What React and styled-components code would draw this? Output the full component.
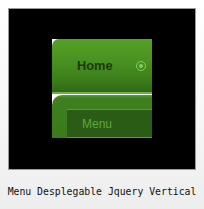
import styled, { createGlobalStyle } from "styled-components";

const GlobalStyle = createGlobalStyle`
  html, body {
    margin: 0;
    padding: 0;
  }
  body {
    width: 204px;
    height: 209px;
    background: linear-gradient(to bottom, #ffffff 0%, #f6f6f6 60%, #ededed 100%);
    overflow: hidden;
  }
`;

const Page = styled.div`
  width: 204px;
  height: 209px;
  padding-top: 8px;
  box-sizing: border-box;
  display: flex;
  flex-direction: column;
  align-items: center;
`;

const Frame = styled.div`
  width: 188px;
  height: 162px;
  box-sizing: border-box;
  background: #000;
  border: 1px solid #9a9a9a;
  display: flex;
  align-items: center;
  justify-content: center;
`;

const Panel = styled.div`
  width: 100px;
  height: 99px;
  margin-top: -1px;
  background: #fff;
  display: flex;
  flex-direction: column;
`;

const HomeItem = styled.div`
  height: 55px;
  box-sizing: border-box;
  border-top-left-radius: 7px;
  background: linear-gradient(to bottom, #55a126 0%, #4a9222 40%, #3a7c19 80%, #30681a 100%);
  border-bottom: 2px solid #6ab33e;
  display: flex;
  align-items: center;
  padding-left: 25px;
  padding-right: 5px;
`;

const HomeLabel = styled.span`
  flex: 1;
  font-family: "Liberation Sans", Arial, sans-serif;
  font-weight: bold;
  font-size: 12.8px;
  color: #1a3a0b;
`;

const Dot = styled.span`
  width: 8px;
  height: 8px;
  border-radius: 50%;
  border: 1.5px solid #7fd258;
  display: flex;
  align-items: center;
  justify-content: center;
  margin-right: 1px;

  &::after {
    content: "";
    width: 4px;
    height: 4px;
    border-radius: 50%;
    background: #7fd258;
  }
`;

const SubBlock = styled.div`
  flex: 1;
  margin-top: 1px;
  border-top-left-radius: 10px;
  background: linear-gradient(to bottom, #5aa22f 0px, #3f801e 3px, #3a7a1c 100%);
  padding-top: 14px;
  padding-left: 15px;
  display: flex;
  flex-direction: column;
`;

const SubItem = styled.div`
  flex: 1;
  box-sizing: border-box;
  background: #2b5c16;
  border-top: 1px solid #5c9a38;
  border-bottom: 1px solid #5c9a38;
  display: flex;
  align-items: center;
  padding-left: 15px;
  font-family: "Liberation Sans", Arial, sans-serif;
  font-size: 12px;
  color: #5fa83a;
`;

const Caption = styled.div`
  margin-top: 16px;
  font-family: "DejaVu Sans Mono", "Liberation Mono", monospace;
  font-size: 9.8px;
  color: #111;
  white-space: nowrap;
`;

export default function App() {
  return (
    <>
      <GlobalStyle />
      <Page>
        <Frame>
          <Panel>
            <HomeItem>
              <HomeLabel>Home</HomeLabel>
              <Dot />
            </HomeItem>
            <SubBlock>
              <SubItem>Menu</SubItem>
            </SubBlock>
          </Panel>
        </Frame>
        <Caption>Menu Desplegable Jquery Vertical</Caption>
      </Page>
    </>
  );
}
